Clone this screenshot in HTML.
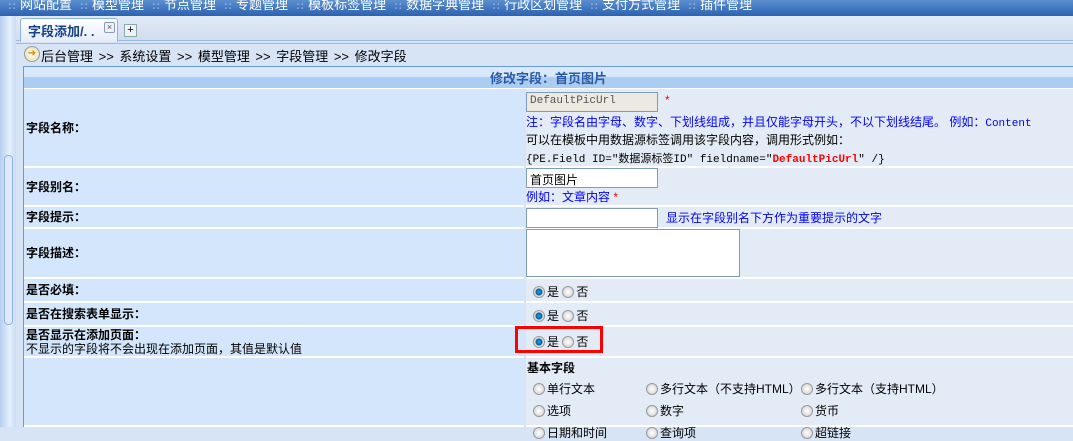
<!DOCTYPE html>
<html><head><meta charset="utf-8"><style>
*{margin:0;padding:0;box-sizing:border-box}
body{width:1073px;height:427px;overflow:hidden;position:relative;background:#d6e4f5;font:12px "Liberation Sans","Noto Sans CJK SC",sans-serif;color:#000}
.a{position:absolute}
#top{left:0;top:0;width:1073px;height:16px;background:linear-gradient(#5b8fd0,#2b62b0);color:#fff;font-size:13px;line-height:10px;white-space:nowrap;overflow:hidden}
#top span{margin-left:8px}
#top span:before{content:"\2237";font-size:8px;margin-right:4px;opacity:.8}
#side{left:0;top:16px;width:16px;height:411px;background:linear-gradient(90deg,#b5cff0,#e6effb 60%,#c9dcf4)}
#tabs{left:16px;top:16px;width:1057px;height:25px;background:linear-gradient(#e2eaf7,#d1ddef);border-bottom:1px solid #99bbe8}
.tab{left:20px;top:18px;width:98px;height:24px;background:linear-gradient(#fff,#e4ecf8);border:1px solid #8db2e3;border-bottom:none;border-radius:3px 3px 0 0;font-weight:bold;color:#15428b;font-size:13px;padding:2px 0 0 7px;white-space:nowrap}
#bc{left:16px;top:43px;width:1057px;height:23px;background:#d7e4f6;border-top:1px solid #99bbe8}
.lbl{position:absolute;left:24px;width:500px;background:#d3e6fb;border-bottom:2px solid #fff;font-weight:bold;padding-left:2px}
.val{position:absolute;left:526px;width:547px;background:#e3ebf6;border-bottom:2px solid #fff;padding-left:1px}
.inp{position:absolute;background:#fff;border:1px solid #7f9db9;height:20px;font-size:12px;padding:2px 3px}
.blue{color:#0000ff}.red{color:#f00}
.mono{font-family:"Liberation Mono","Noto Sans CJK SC",monospace;font-size:11px}
.r{display:inline-block;width:12px;height:12px;border-radius:50%;border:1px solid #999;background:radial-gradient(#fff,#ccc);vertical-align:-2px;margin-right:2px}
.r.on{background:radial-gradient(circle,#2aa0e0 0,#0660a0 3px,#ddd 4px,#fff 6px)}
</style></head><body>
<div id="top" class="a"><span>网站配置</span><span>模型管理</span><span>节点管理</span><span>专题管理</span><span>模板标签管理</span><span>数据字典管理</span><span>行政区划管理</span><span>支付方式管理</span><span>插件管理</span></div>
<div id="side" class="a"></div>
<div class="a" style="left:4px;top:155px;width:9px;height:170px;border:1px solid #8db2e3;border-radius:4px;background:#dfe9f7"></div>
<div id="tabs" class="a"></div>
<div class="a tab">字段添加/. .</div>
<div class="a" style="left:104px;top:22px;width:11px;height:11px;border:1px solid #8a9ab0;border-radius:2px;font-size:9px;line-height:9px;text-align:center;color:#556;background:#eef2f8">×</div>
<div class="a" style="left:124px;top:24px;width:13px;height:13px;border:1px solid #8aa;background:#eef3fa;font-size:11px;line-height:11px;text-align:center">+</div>
<div id="bc" class="a"></div>
<div class="a" style="left:24px;top:46px;width:16px;height:16px;border-radius:50%;border:1px solid #999;background:radial-gradient(#fff,#e8d9a0);color:#c80;font-size:10px;line-height:14px;text-align:center">➔</div>
<div class="a" style="left:41px;top:46px;font-size:13px;word-spacing:2px">后台管理 &gt;&gt; 系统设置 &gt;&gt; 模型管理 &gt;&gt; 字段管理 &gt;&gt; 修改字段</div>
<div class="a" style="left:23px;top:66px;width:1050px;height:361px;border-left:1px solid #6b9bd6;border-top:1px solid #6b9bd6"></div>
<div class="a" style="left:24px;top:67px;width:1049px;height:22px;background:linear-gradient(#d9e8fb 0,#d9e8fb 45%,#abcdf2 50%);text-align:center;font-weight:bold;color:#2a5ba8;font-size:13px;line-height:23px;border-bottom:1px solid #fff">修改字段：首页图片</div>

<div class="lbl" style="top:89px;height:79px;line-height:78px">字段名称：</div>
<div class="val" style="top:89px;height:79px">
 <div class="inp mono" style="left:0;top:3px;width:132px;background:#ece9e1;color:#555">DefaultPicUrl</div>
 <span class="a red" style="left:139px;top:4px">*</span>
 <div class="a blue" style="left:0;top:24px;white-space:nowrap">注：字段名由字母、数字、下划线组成，并且仅能字母开头，不以下划线结尾。 例如：<span class="mono">Content</span></div>
 <div class="a" style="left:0;top:42px;white-space:nowrap">可以在模板中用数据源标签调用该字段内容，调用形式例如：</div>
 <div class="a mono" style="left:0;top:61px;white-space:nowrap">{PE.Field ID="数据源标签ID" fieldname="<span class="red" style="font-weight:bold">DefaultPicUrl</span>" /}</div>
</div>
<div class="lbl" style="top:168px;height:39px;line-height:38px">字段别名：</div>
<div class="val" style="top:168px;height:39px">
 <div class="inp" style="left:0;top:0;width:132px">首页图片</div>
 <div class="a blue" style="left:0;top:20px">例如：文章内容 <span class="red">*</span></div>
</div>
<div class="lbl" style="top:207px;height:22px;line-height:20px">字段提示：</div>
<div class="val" style="top:207px;height:22px">
 <div class="inp" style="left:0;top:1px;width:132px"></div>
 <div class="a blue" style="left:140px;top:2px">显示在字段别名下方作为重要提示的文字</div>
</div>
<div class="lbl" style="top:229px;height:50px;line-height:48px">字段描述：</div>
<div class="val" style="top:229px;height:50px">
 <div class="inp" style="left:0;top:0;width:214px;height:48px"></div>
</div>
<div class="lbl" style="top:279px;height:24px;line-height:22px">是否必填：</div>
<div class="val" style="top:279px;height:24px;padding:4px 0 0 7px"><span class="r on"></span>是 <span class="r"></span>否</div>
<div class="lbl" style="top:303px;height:24px;line-height:22px">是否在搜索表单显示：</div>
<div class="val" style="top:303px;height:24px;padding:4px 0 0 7px"><span class="r on"></span>是 <span class="r"></span>否</div>
<div class="lbl" style="top:327px;height:31px;padding-top:1px;line-height:14px">是否显示在添加页面：<br><span style="font-weight:normal">不显示的字段将不会出现在添加页面，其值是默认值</span></div>
<div class="val" style="top:327px;height:31px;padding:6px 0 0 7px"><span class="r on"></span>是 <span class="r"></span>否</div>
<div class="a" style="left:515px;top:326px;width:88px;height:27px;border:3px solid #f00"></div>
<div class="lbl" style="top:358px;height:69px"></div>
<div class="val" style="top:358px;height:69px">
 <div class="a" style="left:1px;top:1px;font-weight:bold">基本字段</div>
 <div class="a" style="left:7px;top:22px"><span class="r"></span>单行文本</div>
 <div class="a" style="left:120px;top:22px"><span class="r"></span>多行文本（不支持HTML）</div>
 <div class="a" style="left:275px;top:22px"><span class="r"></span>多行文本（支持HTML）</div>
 <div class="a" style="left:7px;top:44px"><span class="r"></span>选项</div>
 <div class="a" style="left:120px;top:44px"><span class="r"></span>数字</div>
 <div class="a" style="left:275px;top:44px"><span class="r"></span>货币</div>
 <div class="a" style="left:7px;top:66px"><span class="r"></span>日期和时间</div>
 <div class="a" style="left:120px;top:66px"><span class="r"></span>查询项</div>
 <div class="a" style="left:275px;top:66px"><span class="r"></span>超链接</div>
</div>
</body></html>
